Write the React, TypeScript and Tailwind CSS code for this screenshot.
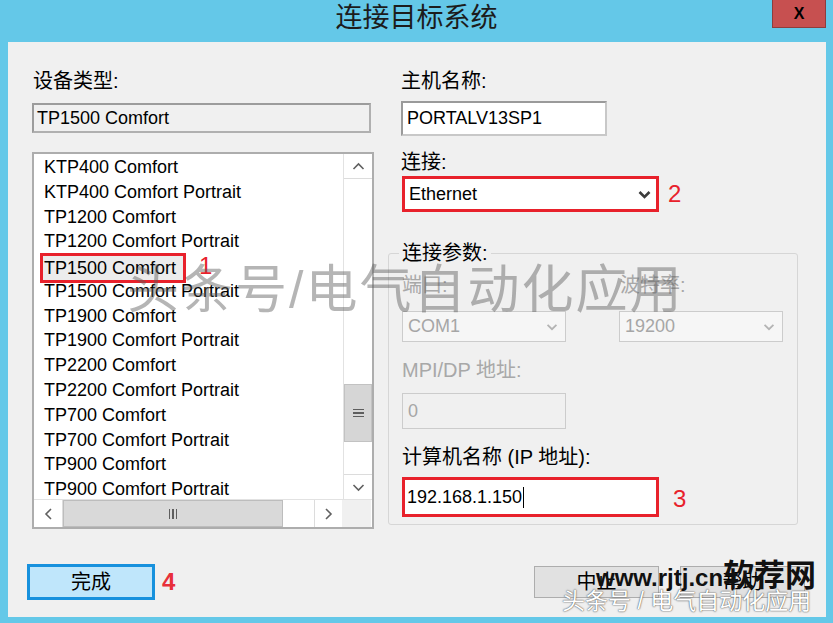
const ITEMS = [
  'KTP400 Comfort',
  'KTP400 Comfort Portrait',
  'TP1200 Comfort',
  'TP1200 Comfort Portrait',
  'TP1500 Comfort',
  'TP1500 Comfort Portrait',
  'TP1900 Comfort',
  'TP1900 Comfort Portrait',
  'TP2200 Comfort',
  'TP2200 Comfort Portrait',
  'TP700 Comfort',
  'TP700 Comfort Portrait',
  'TP900 Comfort',
  'TP900 Comfort Portrait',
]

type Dir = 'up' | 'down' | 'left' | 'right'

function Chev({ dir, className, width = 1.6 }: { dir: Dir; className?: string; width?: number }) {
  const pts = { up: '1,7 6,2 11,7', down: '1,2 6,7 11,2', left: '7,1 2,6 7,11', right: '2,1 7,6 2,11' }[dir]
  const vb = dir === 'up' || dir === 'down' ? '0 0 12 9' : '0 0 9 12'
  return (
    <svg viewBox={vb} className={className} fill="none" stroke="currentColor" strokeWidth={width}>
      <polyline points={pts} />
    </svg>
  )
}

function Label({ children, muted }: { children: React.ReactNode; muted?: boolean }) {
  return (
    <div className={`h-[24px] text-[20px] leading-[24px] whitespace-nowrap ${muted ? 'text-[#a8a8a8]' : 'text-black'}`}>
      {children}
    </div>
  )
}

function Mark({ n, className }: { n: string; className?: string }) {
  return <span className={`text-[24px] leading-none text-[#e8212b] ${className ?? ''}`}>{n}</span>
}

function ListBox() {
  return (
    <div className="mt-[19px] h-[377px] w-[342px] border-2 border-[#adadad] bg-white flex flex-col">
      <div className="flex flex-1 min-h-0">
        <div className="flex-1 overflow-hidden pt-[1px]">
          {ITEMS.map((it, i) => (
            <div key={it} className="h-[24.8px] flex items-center pl-[10px] text-[18px] whitespace-nowrap">
              {i === 4 ? (
                <>
                  <span className="-ml-[4px] -mt-[1px] self-start h-[30px] flex items-center pl-[1px] pr-[7px] border-[3px] border-[#e8212b] bg-[#ececec]">
                    {it}
                  </span>
                  <Mark n="1" className="ml-[13px] -mt-[2px] text-[22px]" />
                </>
              ) : (
                it
              )}
            </div>
          ))}
        </div>
        <div className="w-[29px] flex flex-col border-l border-[#e2e2e2] bg-white">
          <div className="h-[25px] flex items-center justify-center border-b border-[#dcdcdc] text-[#606060]">
            <Chev dir="up" className="w-[13px] h-[9px]" />
          </div>
          <div className="flex-1">
            <div className="mt-[205px] h-[58px] bg-[#d6d6d6] border border-[#c2c2c2] flex flex-col items-center justify-center gap-[2px]">
              <div className="w-[11px] h-[1.5px] bg-[#5e5e5e]" />
              <div className="w-[11px] h-[1.5px] bg-[#5e5e5e]" />
              <div className="w-[11px] h-[1.5px] bg-[#5e5e5e]" />
            </div>
          </div>
          <div className="h-[25px] flex items-center justify-center border-t border-[#dcdcdc] text-[#606060]">
            <Chev dir="down" className="w-[13px] h-[9px]" />
          </div>
        </div>
      </div>
      <div className="h-[28px] flex border-t border-[#e2e2e2]">
        <div className="w-[29px] flex items-center justify-center border-r border-[#dcdcdc] text-[#606060]">
          <Chev dir="left" className="w-[9px] h-[12px]" />
        </div>
        <div className="w-[220px] bg-[#d9d9d9] border border-[#bdbdbd] flex items-center justify-center gap-[2px]">
          <div className="w-[1.5px] h-[10px] bg-[#5e5e5e]" />
          <div className="w-[1.5px] h-[10px] bg-[#5e5e5e]" />
          <div className="w-[1.5px] h-[10px] bg-[#5e5e5e]" />
        </div>
        <div className="w-[31px]" />
        <div className="w-[28px] flex items-center justify-center border-l border-[#dcdcdc] text-[#606060]">
          <Chev dir="right" className="w-[9px] h-[12px]" />
        </div>
        <div className="w-[29px] bg-[#f0f0f0]" />
      </div>
    </div>
  )
}

function Disabled({ text, combo }: { text: string; combo?: boolean }) {
  return (
    <div
      className={`w-[164px] border border-[#cccccc] flex items-center pl-[5px] pr-[7px] text-[18px] text-[#a6a6a6] ${
        combo ? 'h-[31px] bg-[#f6f6f6]' : 'h-[36px] bg-[#f0f0f0]'
      }`}
    >
      <span className="flex-1">{text}</span>
      {combo && <Chev dir="down" className="w-[12px] h-[8px] text-[#b4b4b4]" width={2} />}
    </div>
  )
}

export default function App() {
  return (
    <div className="relative w-[833px] h-[623px] overflow-hidden bg-[#64c8e8] font-['Liberation_Sans','Noto_Sans_CJK_SC',sans-serif] text-black">
      <div className="relative h-[42px] flex items-center justify-center">
        <span className="-mt-[5px] text-[27px] leading-none text-[#1c1c1c]">连接目标系统</span>
        <div className="absolute right-[7px] top-0 w-[54px] h-[28px] bg-[#c75050] border border-t-0 border-[#8e3d3d] flex items-center justify-center text-[16px] font-bold leading-none">
          X
        </div>
      </div>

      <div className="ml-[8px] mr-[7px] h-[575px] bg-[#f0f0f0] flex flex-col">
        <div className="flex">
          <div className="pl-[24px] pt-[27px] w-[366px]">
            <div className="pl-[1px]">
              <Label>设备类型:</Label>
            </div>
            <div className="mt-[10px] h-[30px] w-[339px] border-2 border-[#b0b0b0] border-t-[#9c9c9c] border-l-[#9c9c9c] flex items-center pl-[3px] text-[18px]">
              TP1500 Comfort
            </div>
            <ListBox />
          </div>

          <div className="ml-[14px] pt-[27px] w-[410px]">
            <div className="pl-[13px]">
              <Label>主机名称:</Label>
              <div className="mt-[8px] h-[35px] w-[206px] bg-white border-2 border-[#9a9a9a] border-b-[#c8c8c8] border-r-[#c8c8c8] flex items-center pl-[4px] text-[18px]">
                PORTALV13SP1
              </div>
              <div className="mt-[14px]">
                <Label>连接:</Label>
              </div>
              <div className="mt-[2px] flex items-center">
                <div className="ml-[1px] h-[36px] w-[257px] bg-white border-[3px] border-[#e8212b] flex items-center pl-[4px] pr-[5px] text-[18px]">
                  <span className="flex-1">Ethernet</span>
                  <Chev dir="down" className="w-[13px] h-[9px] text-[#3c3c3c]" width={2.6} />
                </div>
                <Mark n="2" className="ml-[9px]" />
              </div>
            </div>

            <fieldset className="mt-[29px] w-[410px] min-w-0 border border-[#d6d6d6] rounded-[3px] pb-[7px]">
              <legend className="ml-[10px] px-[3px] text-[20px] leading-[24px]">连接参数:</legend>
              <div className="pl-[13px]">
                <div className="mt-[8px] flex">
                  <div className="w-[218px]">
                    <Label muted>端口:</Label>
                  </div>
                  <Label muted>波特率:</Label>
                </div>
                <div className="mt-[14px] flex gap-[53px]">
                  <Disabled text="COM1" combo />
                  <Disabled text="19200" combo />
                </div>
                <div className="mt-[16px]">
                  <Label muted>MPI/DP 地址:</Label>
                </div>
                <div className="mt-[11px]">
                  <Disabled text="0" />
                </div>
                <div className="mt-[16px]">
                  <Label>计算机名称 (IP 地址):</Label>
                </div>
                <div className="mt-[8px] flex items-center">
                  <div className="h-[40px] w-[257px] bg-white border-[3px] border-[#e8212b] flex items-center pl-[2px] text-[18px]">
                    192.168.1.150
                    <span className="ml-[1px] w-[1px] h-[21px] bg-black" />
                  </div>
                  <Mark n="3" className="ml-[14px] mt-[3px]" />
                </div>
              </div>
            </fieldset>
          </div>
        </div>

        <div className="mt-[35px] flex items-center pl-[19px] pr-[21px]">
          <div className="w-[128px] h-[36px] border-[3px] border-[#1791dd] bg-[#bfe6fb] flex items-center justify-center text-[20px]">
            完成
          </div>
          <Mark n="4" className="ml-[7px] font-bold text-[#e8303a]" />
          <div className="ml-auto w-[125px] h-[32px] bg-[#e1e1e1] border border-[#adadad] flex items-center justify-center text-[20px]">
            中止
          </div>
          <div className="ml-[21px] w-[125px] h-[32px] bg-[#e1e1e1] border border-[#adadad] flex items-center justify-center text-[20px]">
            帮助
          </div>
        </div>
      </div>

      {/* watermarks */}
      <div className="pointer-events-none absolute left-[127px] top-[264px] text-[52px] leading-none tracking-[2px] text-[#5a5a5a]/45 whitespace-nowrap">
        头条号/电气自动化应用
      </div>
      <div className="pointer-events-none absolute left-[596px] top-[560px] flex items-baseline whitespace-nowrap text-[#111]">
        <span className="text-[24px] font-bold">www.rjtj.cn</span>
        <span className="text-[31px] font-bold leading-none">软荐网</span>
      </div>
      <div className="pointer-events-none absolute left-[562px] top-[588px] text-[23px] leading-[26px] text-white whitespace-nowrap [text-shadow:0_0_1px_#444,0_0_2px_#777]">
        头条号 / 电气自动化应用
      </div>
    </div>
  )
}
